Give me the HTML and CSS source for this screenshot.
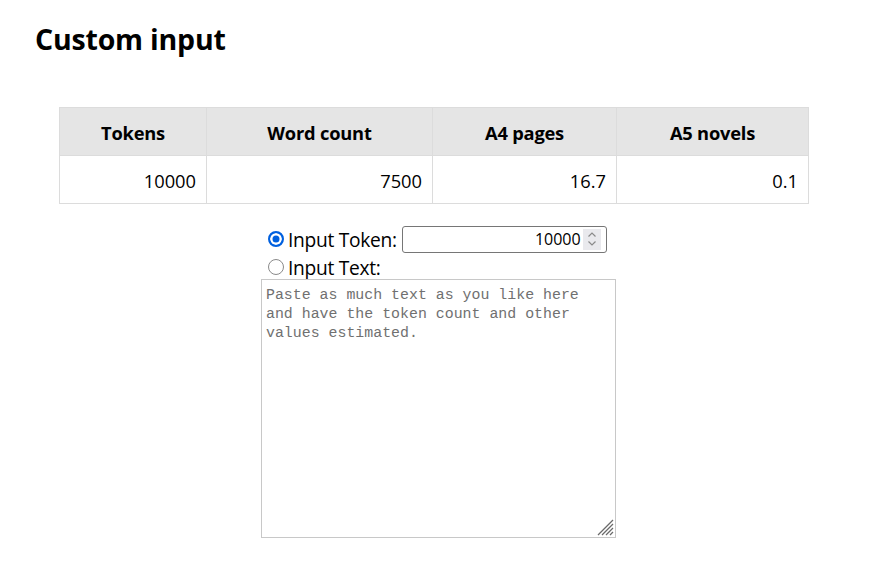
FILE: index.html
```html
<!DOCTYPE html>
<html>
<head>
<meta charset="utf-8">
<link rel="stylesheet" href="styles.css">
</head>
<body>
<h1 class="title">Custom input</h1>
<table class="stats">
  <thead>
    <tr><th class="c1">Tokens</th><th class="c2">Word count</th><th class="c3">A4 pages</th><th class="c4">A5 novels</th></tr>
  </thead>
  <tbody>
    <tr><td>10000</td><td>7500</td><td>16.7</td><td>0.1</td></tr>
  </tbody>
</table>
<div class="form">
  <div class="row">
    <label class="opt"><span class="radio on"></span>Input Token:</label>
    <div class="num"><span class="val">10000</span><span class="spin"><svg width="10" height="18" viewBox="0 0 10 18"><path d="M1.5 6.5 L5 3 L8.5 6.5" fill="none" stroke="#8a8a8a" stroke-width="1.2"/><path d="M1.5 11.5 L5 15 L8.5 11.5" fill="none" stroke="#8a8a8a" stroke-width="1.2"/></svg></span></div>
  </div>
  <div class="row row2">
    <label class="opt"><span class="radio"></span>Input Text:</label>
  </div>
  <div class="area">
    <div class="ph">Paste as much text as you like here and have the token count and other values estimated.</div>
    <svg class="grip" width="18" height="18" viewBox="0 0 18 18"><path d="M17 2 L2 17 M17 6 L6 17 M17 10 L10 17 M17 14 L14 17" stroke="#6a6a6a" stroke-width="1.3" fill="none"/></svg>
  </div>
</div>
</body>
</html>
```
FILE: styles.css
```css
html, body { margin: 0; padding: 0; background: #fff; }
body {
  font-family: "Open Sans", "Noto Sans", sans-serif;
  color: #000;
  width: 877px;
}
.title {
  margin: 0;
  padding: 19px 0 0 35px;
  font-size: 28.5px;
  font-weight: 700;
  line-height: 40px;
  letter-spacing: -0.2px;
  height: 88px;
  box-sizing: border-box;
}
.stats {
  margin: 19px 0 0 59px;
  border-collapse: collapse;
  width: 750px;
  font-size: 18.3px;
}
.stats th, .stats td {
  border: 1px solid #dcdcdc;
  height: 48px;
  padding: 0 10px;
  box-sizing: border-box;
}
.stats th {
  background: #e5e5e5;
  font-weight: 700;
  text-align: center;
  letter-spacing: -0.2px;
  padding-top: 2px;
}
.stats td { text-align: right; padding-top: 2px; }
.c1 { width: 147px; }
.c2 { width: 226px; }
.c3 { width: 184px; }
.c4 { width: 192px; }
.form {
  width: 355px;
  margin: 21px 0 0 261px;
  font-size: 19.2px;
}
.row {
  display: flex;
  align-items: center;
  height: 28px;
}
.row2 {
  height: 26px;
  align-items: flex-start;
}
.row2 .opt { height: 28px; }
.opt {
  display: flex;
  align-items: center;
  padding-left: 7px;
  letter-spacing: -0.3px;
}
.radio {
  width: 16px;
  height: 16px;
  border: 1.5px solid #8a8a8a;
  border-radius: 50%;
  margin-right: 4px;
  box-sizing: border-box;
  background: #fff;
}
.radio.on {
  border: 2px solid #0060df;
  background: #0060df;
  box-shadow: inset 0 0 0 2.5px #fff;
}
.num {
  margin-left: 5px;
  width: 205px;
  height: 27px;
  border: 1px solid #767676;
  border-radius: 3px;
  box-sizing: border-box;
  display: flex;
  align-items: center;
  justify-content: flex-end;
  font-size: 16px;
}
.val { margin-right: 2px; }
.spin {
  width: 18px;
  height: 21px;
  margin-right: 5px;
  background: #e9e9ed;
  display: flex;
  align-items: center;
  justify-content: center;
}
.area {
  position: relative;
  width: 355px;
  height: 259px;
  border: 1px solid #c8c8c8;
  box-sizing: border-box;
  padding: 6px 4px 4px;
}
.ph {
  font-family: "Liberation Mono", "DejaVu Sans Mono", monospace;
  font-size: 14.9px;
  line-height: 19px;
  color: #707070;
  width: 330px;
}
.grip { position: absolute; right: 1px; bottom: 1px; }
```
